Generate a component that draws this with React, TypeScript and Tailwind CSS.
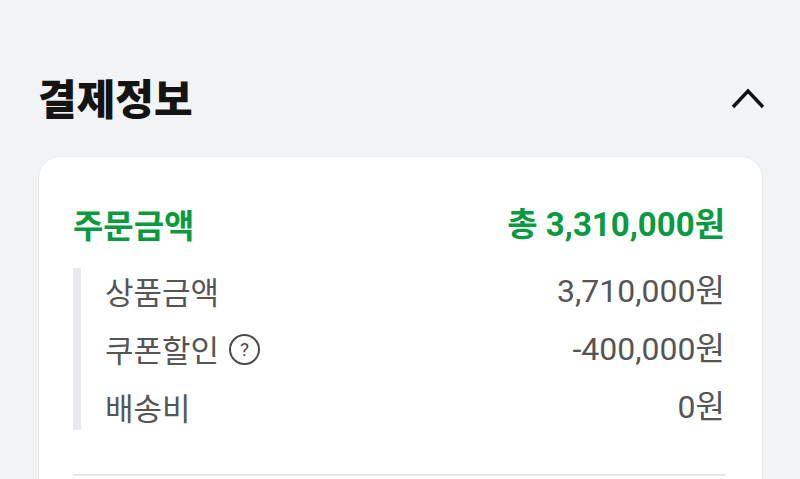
const FONT = { fontFamily: '"Noto Sans CJK KR", "Noto Sans", sans-serif' };
const NUM = { fontFamily: 'Roboto, "Noto Sans CJK KR", sans-serif' };

function Row({ label, value, help }: { label: string; value: string; help?: boolean }) {
  return (
    <div className="flex h-[46px] items-center justify-between">
      <div className="flex items-center gap-[10px] text-[31px] text-[#555]" style={FONT}>
        <span>{label}</span>
        {help && (
          <span
            className="flex h-[31px] w-[31px] items-center justify-center rounded-full border-2 border-[#4a4a4a] text-[19px] leading-none text-[#4a4a4a]"
            style={NUM}
          >
            ?
          </span>
        )}
      </div>
      <span className="text-[32px] text-[#555]" style={NUM}>
        {value}
      </span>
    </div>
  );
}

export default function App() {
  return (
    <div className="h-[479px] w-[800px] overflow-hidden bg-[#f2f3f5] pl-[38px] pr-[37px] pt-[67px]">
      <div className="flex h-[60px] items-center justify-between">
        <h1 className="text-[42px] font-black leading-none text-[#141414]" style={FONT}>
          결제정보
        </h1>
        <svg width="36" height="24" viewBox="0 0 36 24" className="mr-[-3px] mt-[2px]">
          <path d="M3 21 L18 5 L33 21" fill="none" stroke="#111" strokeWidth="3.4" />
        </svg>
      </div>
      <div className="mt-[29px] rounded-[22px] border border-[#e9eaee] bg-white pb-10 pl-[34px] pr-[37px] pt-[48px]">
        <div className="flex h-[40px] items-center justify-between text-[#0a9a3f]">
          <span className="text-[33px] font-bold" style={FONT}>
            주문금액
          </span>
          <span className="text-[33px] font-bold" style={NUM}>
            총 3,310,000원
          </span>
        </div>
        <div className="mt-[23px] flex flex-col gap-3 border-l-[8px] border-[#e8e9ee] pl-[24px]">
          <Row label="상품금액" value="3,710,000원" />
          <Row label="쿠폰할인" value="-400,000원" help />
          <Row label="배송비" value="0원" />
        </div>
        <div className="mt-[44px] h-[2px] bg-[#e6e7eb]" />
        <div className="h-10" />
      </div>
    </div>
  );
}
